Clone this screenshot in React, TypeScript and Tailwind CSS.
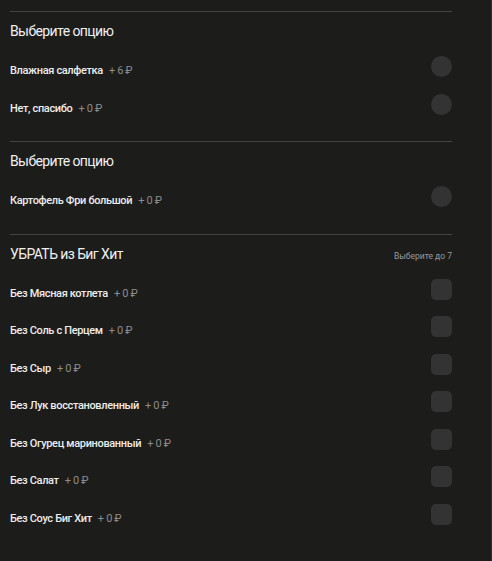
const font = { fontFamily: 'Roboto, "Noto Sans", sans-serif' };

type Option = { name: string; price: string };

const section1: Option[] = [
  { name: 'Влажная салфетка', price: '+ 6 ₽' },
  { name: 'Нет, спасибо', price: '+ 0 ₽' },
];

const section2: Option[] = [{ name: 'Картофель Фри большой', price: '+ 0 ₽' }];

const section3: Option[] = [
  { name: 'Без Мясная котлета', price: '+ 0 ₽' },
  { name: 'Без Соль с Перцем', price: '+ 0 ₽' },
  { name: 'Без Сыр', price: '+ 0 ₽' },
  { name: 'Без Лук восстановленный', price: '+ 0 ₽' },
  { name: 'Без Огурец маринованный', price: '+ 0 ₽' },
  { name: 'Без Салат', price: '+ 0 ₽' },
  { name: 'Без Соус Биг Хит', price: '+ 0 ₽' },
];

function Row({ option, kind }: { option: Option; kind: 'radio' | 'check' }) {
  return (
    <div className="flex h-[37.5px] items-start justify-between">
      <div className="pt-[8px] text-[11px] font-medium leading-[14px] tracking-[-0.35px] text-[#ececec]">
        {option.name}
        <span className="ml-[6px] font-normal text-[#8c8c8c]">{option.price}</span>
      </div>
      <div
        className={
          kind === 'radio'
            ? 'h-[21px] w-[21px] rounded-full bg-[#333333]'
            : 'h-[21px] w-[21px] rounded-[5px] bg-[#333333]'
        }
      />
    </div>
  );
}

function Section({
  title,
  hint,
  options,
  kind,
}: {
  title: string;
  hint?: string;
  options: Option[];
  kind: 'radio' | 'check';
}) {
  return (
    <div className="border-t border-[#424242] pb-[10px]">
      <div className="flex h-[44px] items-start justify-between pt-[10px]">
        <div className="text-[14px] leading-[18px] tracking-[-0.6px] text-[#f0f0f0]">{title}</div>
        {hint && <div className="pt-[5px] text-[8.5px] leading-[12px] text-[#9a9a9a]">{hint}</div>}
      </div>
      {options.map((o) => (
        <Row key={o.name} option={o} kind={kind} />
      ))}
    </div>
  );
}

export default function App() {
  return (
    <div className="min-h-screen border-r border-[#2e2e2e] bg-[#1c1c1b]" style={font}>
      <div className="w-[442px] pl-[10px] pt-[11px] box-content">
        <Section title="Выберите опцию" options={section1} kind="radio" />
        <Section title="Выберите опцию" options={section2} kind="radio" />
        <Section title="УБРАТЬ из Биг Хит" hint="Выберите до 7" options={section3} kind="check" />
      </div>
    </div>
  );
}
